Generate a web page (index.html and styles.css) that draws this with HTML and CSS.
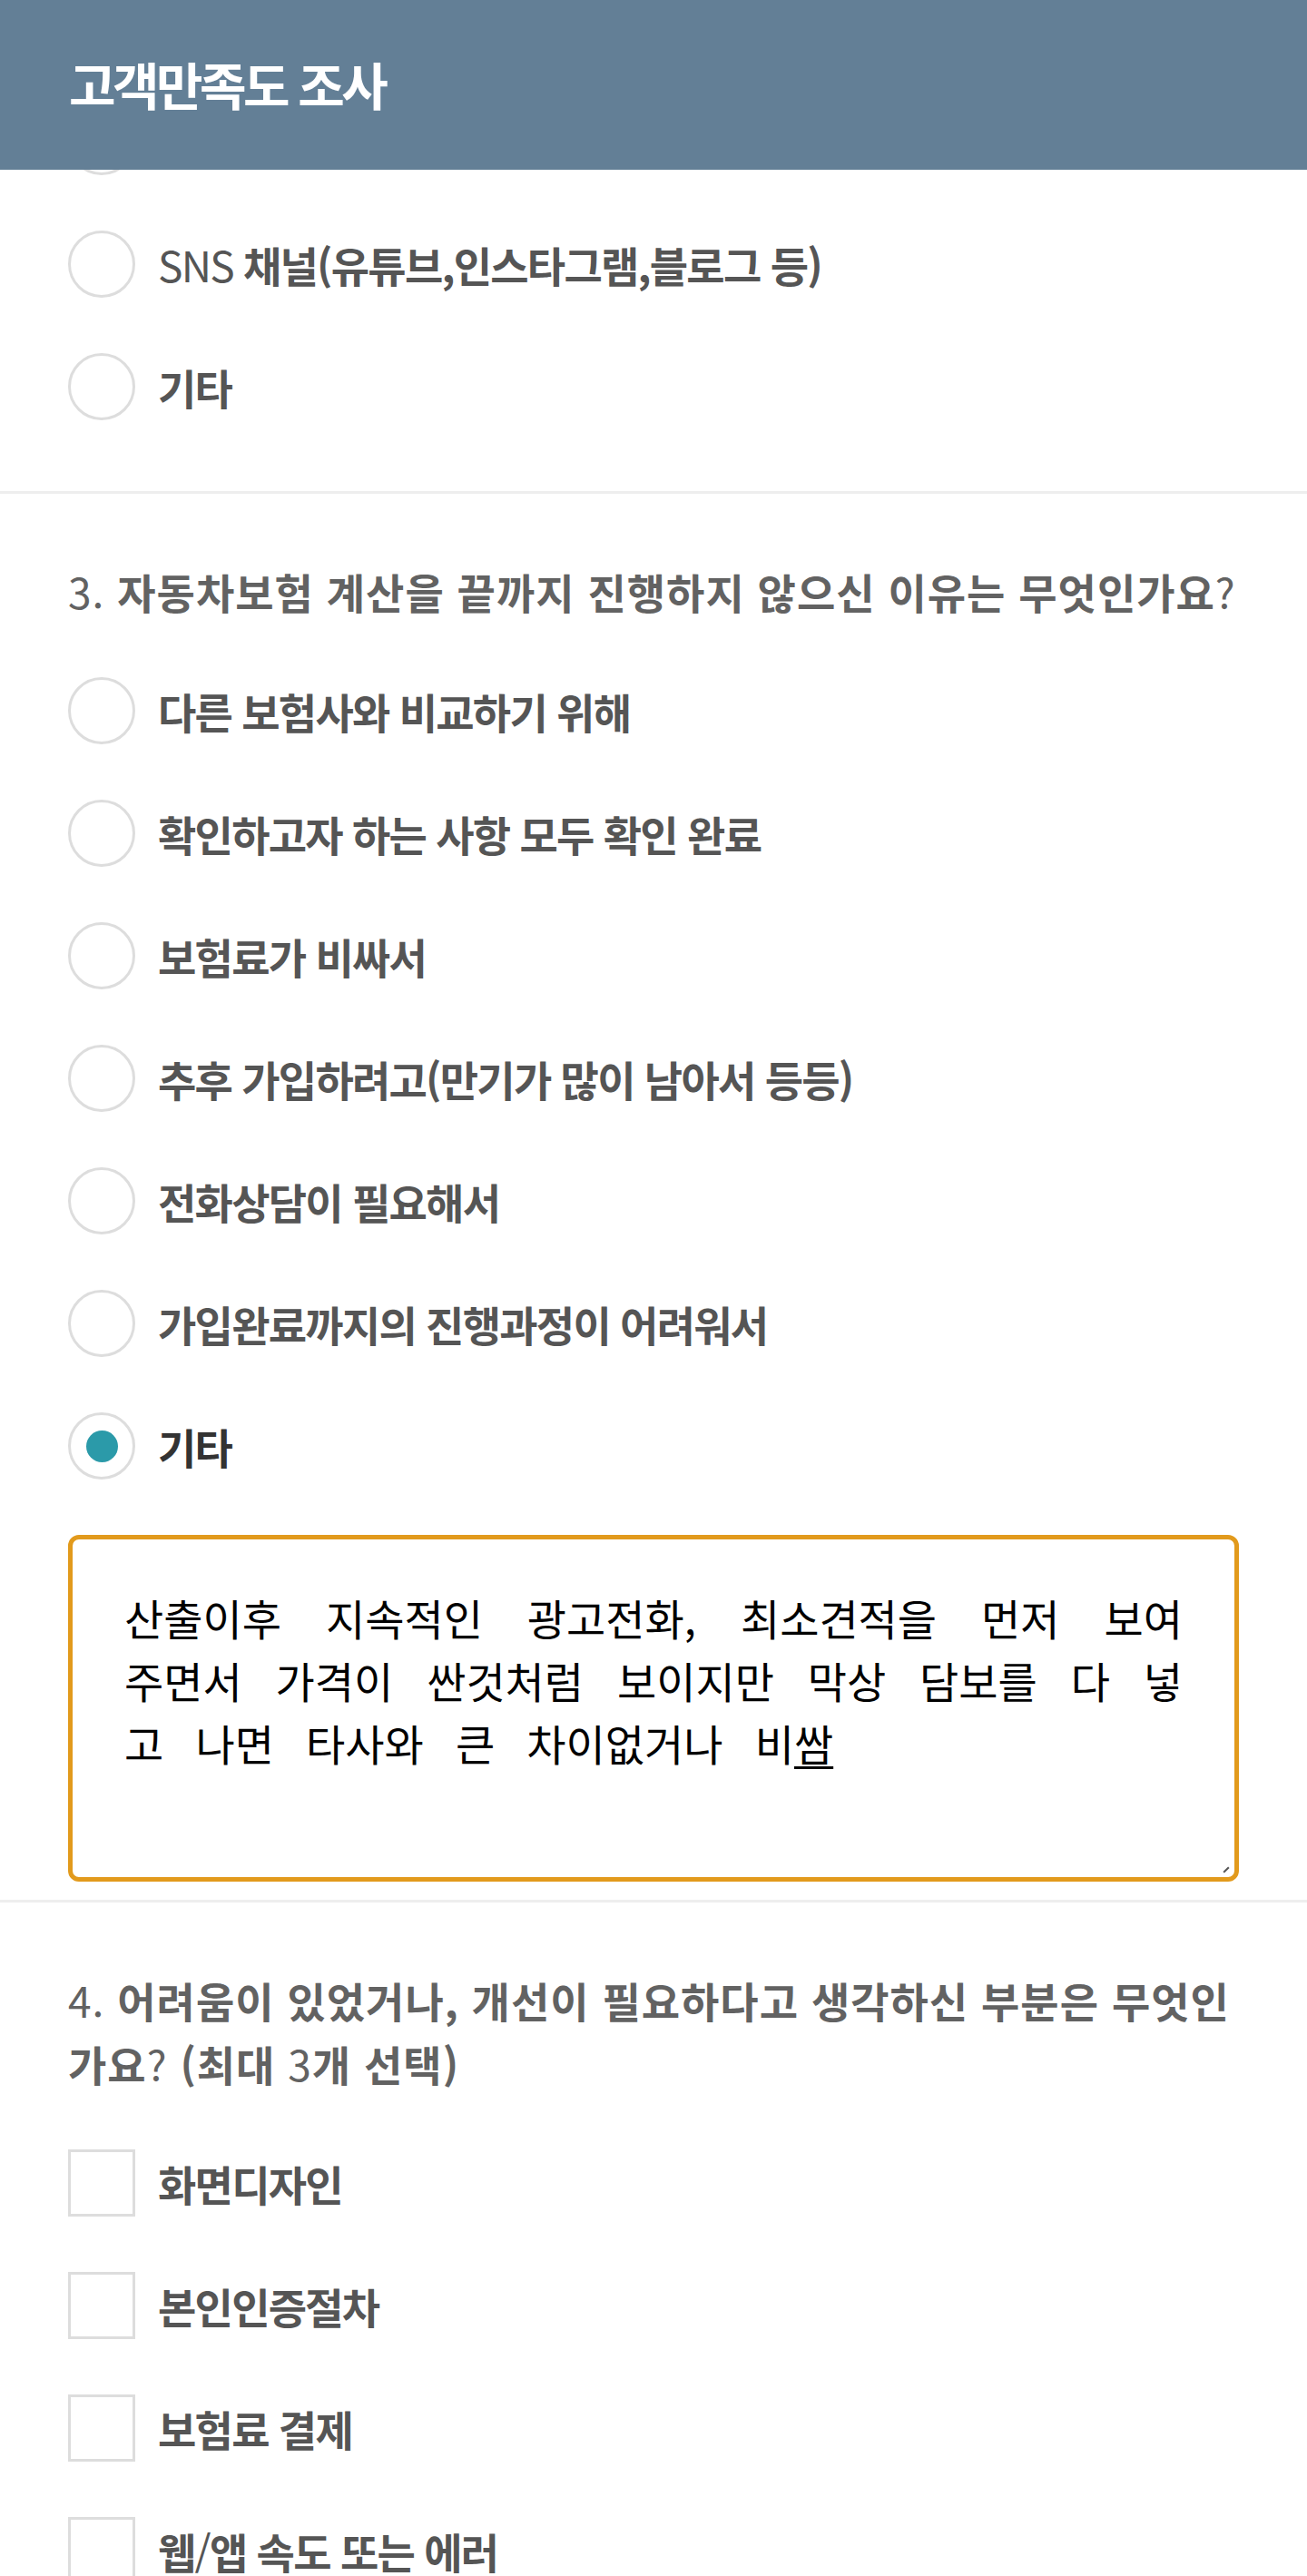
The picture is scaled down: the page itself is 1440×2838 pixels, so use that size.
FILE: index.html
```html
<!DOCTYPE html>
<html lang="ko">
<head>
  <meta charset="UTF-8"/>
  <meta name="viewport" content="width=device-width,initial-scale=1"/>
  <title>고객만족도 조사</title>
  <link rel="stylesheet" href="styles.css">
</head>
<body>

  <header class="topbar">
    <h1>고객만족도 조사</h1>
  </header>

  <main class="survey">

    <!-- 2번 문항 (하단부) -->
    <section class="question question--tail">
      <ul class="options">
        <li class="option"><span class="radio"></span><span class="label">인터넷 검색</span></li>
        <li class="option"><span class="radio"></span><span class="label"><span class="latin">SNS</span> 채널(유튜브,인스타그램,블로그 등)</span></li>
        <li class="option"><span class="radio"></span><span class="label">기타</span></li>
      </ul>
    </section>

    <!-- 3번 문항 -->
    <section class="question">
      <p class="question-title"><span class="latin">3.</span> 자동차보험 계산을 끝까지 진행하지 않으신 이유는 무엇인가요<span class="latin">?</span></p>
      <ul class="options">
        <li class="option"><span class="radio"></span><span class="label">다른 보험사와 비교하기 위해</span></li>
        <li class="option"><span class="radio"></span><span class="label">확인하고자 하는 사항 모두 확인 완료</span></li>
        <li class="option"><span class="radio"></span><span class="label">보험료가 비싸서</span></li>
        <li class="option"><span class="radio"></span><span class="label">추후 가입하려고(만기가 많이 남아서 등등)</span></li>
        <li class="option"><span class="radio"></span><span class="label">전화상담이 필요해서</span></li>
        <li class="option"><span class="radio"></span><span class="label">가입완료까지의 진행과정이 어려워서</span></li>
        <li class="option option--checked"><span class="radio radio--checked"></span><span class="label">기타</span></li>
      </ul>
      <div class="answer">
        <span class="answer-line">산출이후 지속적인 광고전화, 최소견적을 먼저 보여</span>
        <span class="answer-line">주면서 가격이 싼것처럼 보이지만 막상 담보를 다 넣</span>
        <span class="answer-line answer-line--last">고 나면 타사와 큰 차이없거나 비<span class="composing">쌈</span></span>
      </div>
    </section>

    <!-- 4번 문항 -->
    <section class="question">
      <p class="question-title"><span class="latin">4.</span> 어려움이 있었거나, 개선이 필요하다고 생각하신 부분은 무엇인가요<span class="latin">?</span> (최대 <span class="latin">3</span>개 선택)</p>
      <ul class="options">
        <li class="option"><span class="checkbox"></span><span class="label">화면디자인</span></li>
        <li class="option"><span class="checkbox"></span><span class="label">본인인증절차</span></li>
        <li class="option"><span class="checkbox"></span><span class="label">보험료 결제</span></li>
        <li class="option"><span class="checkbox"></span><span class="label">웹<span class="latin">/</span>앱 속도 또는 에러</span></li>
      </ul>
    </section>

  </main>
</body>
</html>
```

FILE: styles.css
```css
body { margin: 0; background: #fff; color: #555; font-family: "Noto Sans CJK KR", sans-serif; }

.topbar {
  position: fixed; top: 0; left: 0; right: 0; z-index: 10;
  height: 187px; box-sizing: border-box;
  display: flex; align-items: center; padding: 0 0 4px 76px;
  background: #637f96;
}
.topbar h1 { margin: 0; color: #fff; font-size: 56px; font-weight: 700; letter-spacing: -3.5px; line-height: 1; }

.survey { padding-top: 119px; }

.question { padding: 72px 75px 20px; border-top: 3px solid #eee; }
.question--tail { padding-top: 0; padding-bottom: 78px; border-top: 0; }

.question-title {
  margin: 0 0 60px; color: #626262;
  font-size: 46px; font-weight: 700; line-height: 70px; letter-spacing: 1px;
}

.latin { font-weight: 400; }

.options { list-style: none; margin: 0; padding: 0; }
.option { display: flex; align-items: center; gap: 25px; height: 74px; }
.option + .option { margin-top: 61px; }

.label { font-size: 46px; font-weight: 700; line-height: 66px; letter-spacing: -1.75px; white-space: nowrap; }
.option--checked .label { color: #333; }

.radio, .checkbox {
  flex-shrink: 0; width: 74px; height: 74px; box-sizing: border-box;
  border: 3px solid #ddd; background: #fff;
  display: grid; place-items: center;
}
.radio { border-radius: 50%; }
.radio--checked::after {
  content: ""; width: 35px; height: 35px; border-radius: 50%; background: #2b9aa9;
}

.answer {
  position: relative; margin-top: 61px;
  height: 382px; box-sizing: border-box; padding: 51px 57px;
  border: 5px solid #e29a1c; border-radius: 12px;
  color: #000; font-size: 47px; font-weight: 400; line-height: 69px; word-spacing: 22px;
}
.answer-line { display: block; white-space: nowrap; text-align: justify; text-align-last: justify; }
.answer-line--last { text-align-last: left; }
.composing { text-decoration: underline; text-decoration-thickness: 3px; text-underline-offset: 6px; }

/* resize grip in the corner */
.answer::after {
  content: ""; position: absolute; right: 5px; bottom: 7px;
  width: 8px; height: 2px; background: #555; transform: rotate(-45deg);
}
```
